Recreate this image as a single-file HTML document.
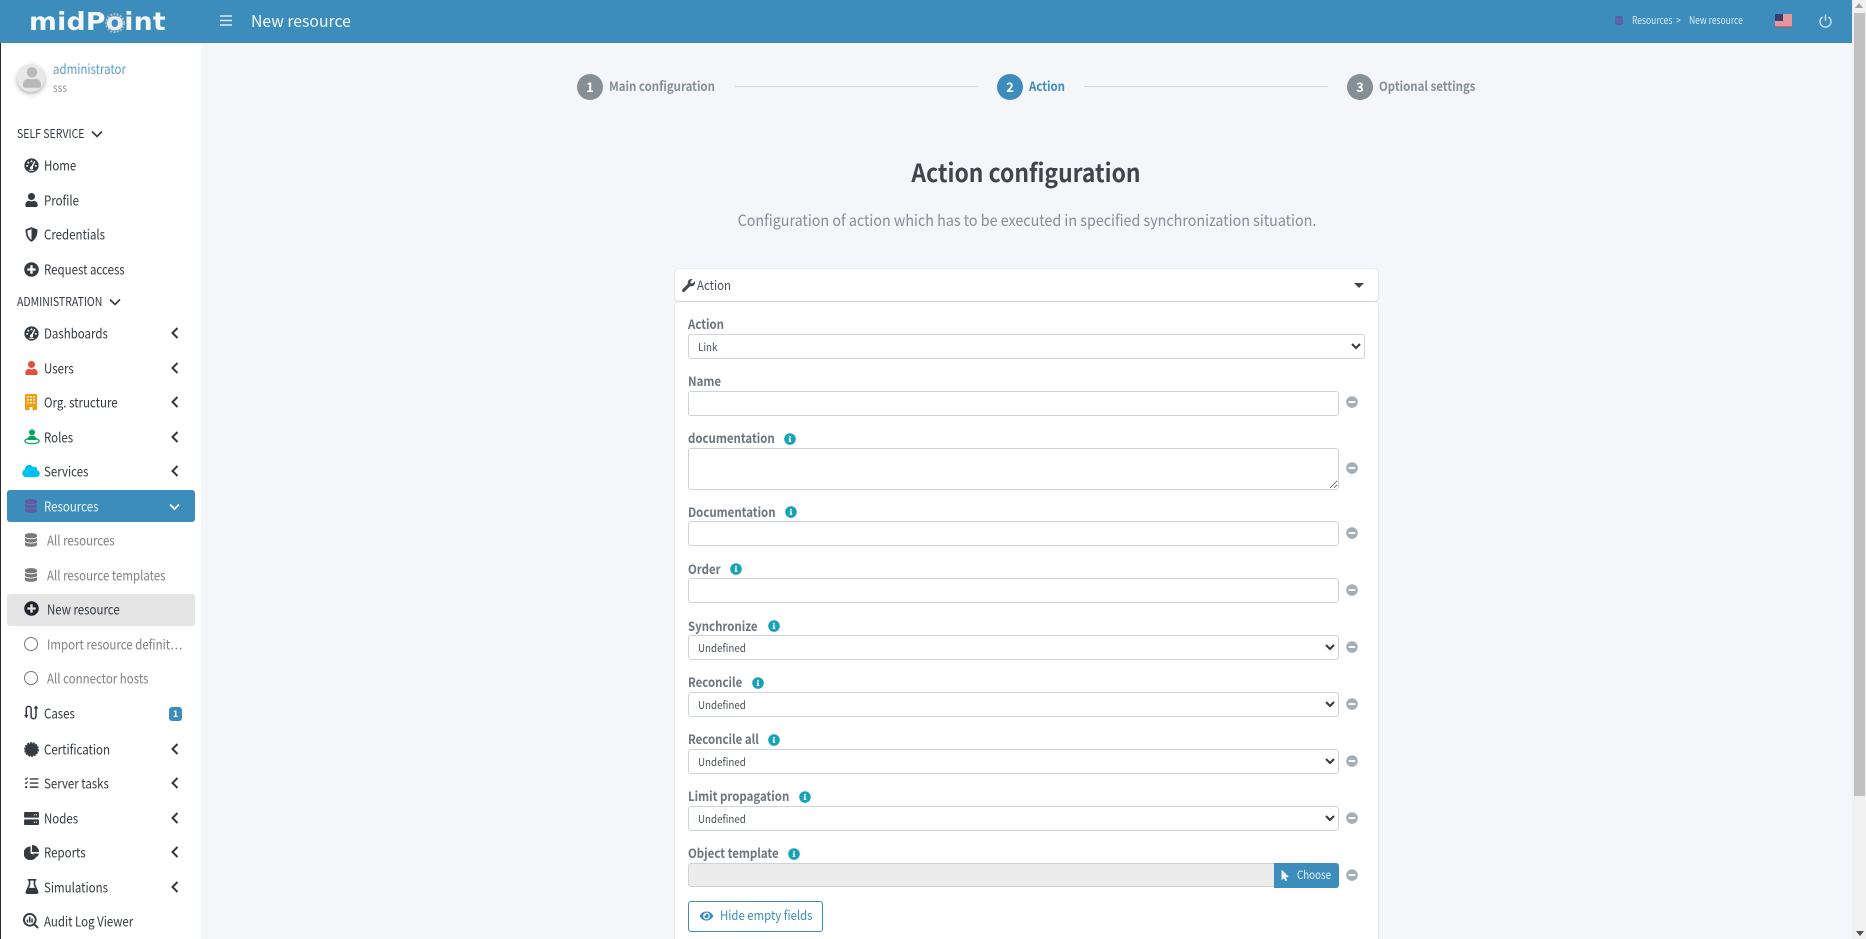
<!DOCTYPE html>
<html><head><meta charset="utf-8"><title>New resource</title>
<style>
html,body{margin:0;padding:0;width:1866px;height:939px;overflow:hidden;background:#f4f6f9}
body{position:relative;font-family:"Noto Sans CJK SC","Liberation Sans",sans-serif;font-size:14px;color:#343a40}
.a{position:absolute}
.t{position:absolute;white-space:nowrap;line-height:20px;height:20px;transform-origin:0 50%}
svg.i{position:absolute;overflow:visible}
.s{font-size:13.5px;color:#343a40;transform:translateY(-.7px) scaleX(.85)}
.sub{font-size:13.5px;color:#7d8185;transform:translateY(-.7px) scaleX(.85)}
.sec{font-size:12px;color:#343a40;transform:scaleX(.875)}
.l{font-size:13px;font-weight:700;color:#6c757d;transform:scaleX(.88)}
.st{font-size:13px;font-weight:700;color:#868e96;transform:scaleX(.88)}
.bc{font-size:10.5px;color:#d9eaf4;transform:translateY(1px) scaleX(.81)}
.o{font-size:11px;color:#495057;left:698px;transform:scaleX(.89)}
.f{position:absolute;box-sizing:border-box;left:688px;width:651px;height:25px;border:1px solid #ced4da;border-radius:3px;background:#fff;margin:0;padding:0 8px;font:11px "Noto Sans CJK SC","Liberation Sans",sans-serif;color:#343a40;outline:0}
select.f{padding:0 4px}
</style></head><body>
<svg width="0" height="0" style="position:absolute"><defs>
<symbol id="user" viewBox="0 0 448 512"><path d="M224 256c70.7 0 128-57.3 128-128S294.7 0 224 0 96 57.3 96 128s57.3 128 128 128zm89.6 32h-16.7c-22.2 10.2-46.9 16-72.9 16s-50.6-5.8-72.9-16h-16.7C60.2 288 0 348.2 0 422.4V464c0 26.5 21.5 48 48 48h352c26.5 0 48-21.5 48-48v-41.6c0-74.2-60.2-134.4-134.4-134.4z"/></symbol>
<symbol id="plus" viewBox="0 0 512 512"><path d="M256 8C119 8 8 119 8 256s111 248 248 248 248-111 248-248S393 8 256 8zm144 276c0 6.6-5.4 12-12 12h-92v92c0 6.6-5.4 12-12 12h-56c-6.6 0-12-5.4-12-12v-92h-92c-6.6 0-12-5.4-12-12v-56c0-6.6 5.4-12 12-12h92v-92c0-6.6 5.4-12 12-12h56c6.6 0 12 5.4 12 12v92h92c6.6 0 12 5.4 12 12v56z"/></symbol>
<symbol id="minus" viewBox="0 0 512 512"><path d="M256 8C119 8 8 119 8 256s111 248 248 248 248-111 248-248S393 8 256 8zM124 296c-6.6 0-12-5.4-12-12v-56c0-6.6 5.4-12 12-12h264c6.6 0 12 5.4 12 12v56c0 6.6-5.4 12-12 12H124z"/></symbol>
<symbol id="info" viewBox="0 0 512 512"><path d="M256 8C119.043 8 8 119.083 8 256c0 136.997 111.043 248 248 248s248-111.003 248-248C504 119.083 392.957 8 256 8zm0 110c23.196 0 42 18.804 42 42s-18.804 42-42 42-42-18.804-42-42 18.804-42 42-42zm56 254c0 6.627-5.373 12-12 12h-88c-6.627 0-12-5.373-12-12v-24c0-6.627 5.373-12 12-12h12v-64h-12c-6.627 0-12-5.373-12-12v-24c0-6.627 5.373-12 12-12h64c6.627 0 12 5.373 12 12v100h12c6.627 0 12 5.373 12 12v24z"/></symbol>
<symbol id="db" viewBox="0 0 448 512"><path d="M448 73.143v45.714C448 159.143 347.667 192 224 192S0 159.143 0 118.857V73.143C0 32.857 100.333 0 224 0s224 32.857 224 73.143zM448 176v102.857C448 319.143 347.667 352 224 352S0 319.143 0 278.857V176c48.125 33.143 136.208 48.572 224 48.572S399.874 209.143 448 176zm0 160v102.857C448 479.143 347.667 512 224 512S0 479.143 0 438.857V336c48.125 33.143 136.208 48.572 224 48.572S399.874 369.143 448 336z"/></symbol>
<symbol id="gauge" viewBox="0 0 16 16"><circle cx="8" cy="8" r="7.6"/><g fill="#fff"><circle cx="8" cy="3.6" r="1.1"/><circle cx="4.6" cy="5" r="1.1"/><circle cx="3.4" cy="8.4" r="1.1"/><circle cx="12.6" cy="8.4" r="1.1"/></g><path d="M11.5 3.6 8.2 10" stroke="#fff" stroke-width="1.5"/><circle cx="8" cy="10.6" r="1.7" fill="#fff"/><path d="M5 13.4h6" stroke="#fff" stroke-width=".8"/></symbol>
<symbol id="shield" viewBox="0 0 14 16"><path fill-rule="evenodd" d="M7 0 .6 2.6C.4 8 2.2 13.4 7 16c4.8-2.6 6.6-8 6.4-13.4L7 0zm0 2.2v11.5C3.9 11.7 2.6 8 2.5 3.9L7 2.2z"/></symbol>
<symbol id="org" viewBox="0 0 12 16"><path fill-rule="evenodd" d="M1 0h10a1 1 0 0 1 1 1v15H7.6v-3H4.4v3H0V1a1 1 0 0 1 1-1zM2.2 2v1.6h1.6V2zm3 0v1.6h1.6V2zm3 0v1.6h1.6V2zm-6 3v1.6h1.6V5zm3 0v1.6h1.6V5zm3 0v1.6h1.6V5zm-6 3v1.6h1.6V8zm3 0v1.6h1.6V8zm3 0v1.6h1.6V8z"/></symbol>
<symbol id="role" viewBox="0 0 16 16"><circle cx="8" cy="3.4" r="3"/><path d="M3.6 11c0-3 1.8-4.2 4.4-4.2s4.4 1.2 4.4 4.2z"/><ellipse cx="8" cy="12" rx="7.2" ry="2.8" fill="none" stroke-width="1.2" stroke="#00a65a"/></symbol>
<symbol id="cloud" viewBox="0 0 640 512"><path d="M537.6 226.6c4.1-10.7 6.4-22.4 6.4-34.6 0-53-43-96-96-96-19.7 0-38.1 6-53.3 16.2C367 64.2 315.3 32 256 32c-88.4 0-160 71.6-160 160 0 2.7.1 5.4.2 8.1C40.2 219.8 0 273.2 0 336c0 79.5 64.5 144 144 144h368c70.7 0 128-57.3 128-128 0-61.9-44-113.6-102.4-125.4z"/></symbol>
<symbol id="cases" viewBox="0 0 16 16"><path d="M2.4 12V4a2.6 2.6 0 0 1 5.2 0v8a2.6 2.6 0 0 0 5.2 0V2.5" fill="none" stroke="#343a40" stroke-width="1.6"/><path d="M0 10.5h4.8L2.4 14.2zM10.4 3.8h4.8L12.8 .2z"/></symbol>
<symbol id="cert" viewBox="0 0 16 16"><circle cx="8" cy="8" r="6.6"/><circle cx="8" cy="8" r="7" fill="none" stroke="#343a40" stroke-width="1.8" stroke-dasharray="2.2 .9"/></symbol>
<symbol id="tasks" viewBox="0 0 16 14"><path d="M6 1.4h10v1.7H6zM6 6.2h10v1.7H6zM6 11h10v1.7H6z"/><path d="M.4 1.8l1.1 1.1L3.6.6M.4 6.6l1.1 1.1 2.1-2.3" fill="none" stroke="#343a40" stroke-width="1.2"/><circle cx="1.8" cy="11.8" r="1.3"/></symbol>
<symbol id="server" viewBox="0 0 16 14"><path fill-rule="evenodd" d="M1 0h14a1 1 0 0 1 1 1v4a1 1 0 0 1-1 1H1a1 1 0 0 1-1-1V1a1 1 0 0 1 1-1zm9.5 2.4v1.2h1.2V2.4zm2.2 0v1.2h1.2V2.4zM1 8h14a1 1 0 0 1 1 1v4a1 1 0 0 1-1 1H1a1 1 0 0 1-1-1V9a1 1 0 0 1 1-1zm9.5 2.4v1.2h1.2v-1.2zm2.2 0v1.2h1.2v-1.2z"/></symbol>
<symbol id="pie" viewBox="0 0 16 16"><path d="M7 1.6A7.3 7.3 0 1 0 13.7 11.4L7 9z"/><path d="M8.5 0A7.5 7.5 0 0 1 16 7.5H8.5z"/><path d="M9.2 9h6.6a7.4 7.4 0 0 1-1.8 3.7z"/></symbol>
<symbol id="flask" viewBox="0 0 14 16"><path d="M3 0h8a.8.8 0 0 1 0 1.7h-.5v4.2l3.2 7.2c.6 1.4-.3 2.9-1.8 2.9H2.1C.6 16-.3 14.5.3 13.1l3.2-7.200V1.7H3A.8.8 0 0 1 3 0zm2.2 1.7v4.600L3.800 9.400h6.400L8.800 6.300V1.700z" fill-rule="evenodd"/></symbol>
<symbol id="audit" viewBox="0 0 16 16"><path fill-rule="evenodd" d="M6.800 0a6.800 6.800 0 0 1 5.400 10.900l3.500 3.500-1.300 1.300-3.500-3.500A6.800 6.800 0 1 1 6.800 0z"/><circle cx="6.800" cy="6.800" r="4.900" fill="#fff"/><path d="M3.700 6.500h1.500v3H3.700zM6 3.700h1.500v5.800H6zM8.300 5.500h1.500v4H8.300z"/></symbol>
<symbol id="left" viewBox="0 0 8 12"><path d="M6.500 1 1.500 6l5 5" fill="none" stroke="#343a40" stroke-width="2"/></symbol>
</defs></svg>

<!-- sidebar -->
<div class="a" style="left:0;top:0;width:201px;height:939px;background:#fff"></div>
<div class="a" style="left:0;top:43px;width:1px;height:896px;background:#2a2a2a"></div>

<!-- header -->
<div class="a" style="left:0;top:0;width:1853px;height:43px;background:#3c8dbc"></div>
<div class="t" style="left:29px;top:7px;height:30px;font:700 25px/30px 'DejaVu Sans',sans-serif;color:#f3f8fb;letter-spacing:.2px;transform:scaleX(1.07)">midP<span style="color:#e8eef2">o</span>int</div>
<svg class="a" style="left:103px;top:11px" width="24" height="24" viewBox="0 0 24 24"><circle cx="12" cy="12" r="8.800" fill="none" stroke="#a9bac4" stroke-width="2.400" stroke-dasharray="2 1.300"/></svg>
<svg class="i" style="left:220px;top:15px" width="12" height="11" viewBox="0 0 12 11"><path d="M0 1h12M0 5.500h12M0 10h12" stroke="#dcebf3" stroke-width="1.500"/></svg>
<div class="t" style="left:251px;top:10px;font-size:16.500px;color:#f2f8fb;transform:scaleX(.955)">New resource</div>
<svg class="i" style="left:1615px;top:16px;fill:#5f5aa2" width="8" height="9"><use href="#db"/></svg>
<div class="t bc" style="left:1631.500px;top:10px">Resources</div>
<div class="t bc" style="left:1676px;top:10px">&gt;</div>
<div class="t bc" style="left:1688.500px;top:10px">New resource</div>
<svg class="i" style="left:1775px;top:14px" width="17" height="13" viewBox="0 0 17 13"><rect width="17" height="13" fill="#fff"/><path d="M0 1h17M0 3h17M0 5h17M0 7h17M0 9h17M0 11h17M0 12.700h17" stroke="#c8323c" stroke-width="1"/><rect width="8" height="7" fill="#3c3b6e"/></svg>
<svg class="i" style="left:1819px;top:14px" width="13" height="14" viewBox="0 0 13 14"><path d="M3.500 3A5.500 5.500 0 1 0 9.500 3M6.500 .6v6" fill="none" stroke="#cfe4f0" stroke-width="1.400"/></svg>

<!-- scrollbar -->
<div class="a" style="left:1852px;top:0;width:14px;height:939px;background:#f1f1f1"></div>
<div class="a" style="left:1854px;top:13px;width:11px;height:783px;background:#c1c1c1"></div>
<div class="a" style="left:1855px;top:3px;width:0;height:0;border:4px solid transparent;border-top:0;border-bottom:5px solid #a3a3a3"></div>
<div class="a" style="left:1855.500px;top:931px;width:0;height:0;border:4px solid transparent;border-bottom:0;border-top:5px solid #505050"></div>

<!-- user -->
<div class="a" style="left:17px;top:64px;width:28px;height:28px;border-radius:50%;background:#e8e8e8;box-shadow:0 2px 5px rgba(0,0,0,.3)"></div>
<svg class="i" style="left:23px;top:67px;fill:#b9b9b9" width="18" height="21"><use href="#user"/></svg>
<div class="t" style="left:52.500px;top:58px;font-size:13.500px;color:#5a9ecb;transform:scaleX(.85)">administrator</div>
<div class="t" style="left:52.500px;top:78px;font-size:11.500px;color:#8a9096;transform:scaleX(.86)">sss</div>

<!-- sidebar text -->
<div class="t sec" style="left:17px;top:124px">SELF SERVICE</div>
<svg class="i" style="left:91px;top:130px" width="12" height="8" viewBox="0 0 12 8"><path d="M1 1.500l5 5 5-5" fill="none" stroke="#343a40" stroke-width="1.600"/></svg>
<svg class="i" style="left:24px;top:158px;fill:#343a40" width="15" height="15"><use href="#gauge"/></svg>
<div class="t s" style="left:44px;top:155px">Home</div>
<svg class="i" style="left:25px;top:193px;fill:#343a40" width="13" height="14"><use href="#user"/></svg>
<div class="t s" style="left:44px;top:190px">Profile</div>
<svg class="i" style="left:24.500px;top:227px;fill:#343a40" width="13" height="15"><use href="#shield"/></svg>
<div class="t s" style="left:44px;top:224px">Credentials</div>
<svg class="i" style="left:24px;top:262px;fill:#343a40" width="15" height="15"><use href="#plus"/></svg>
<div class="t s" style="left:44px;top:259px">Request access</div>
<div class="t sec" style="left:17px;top:292px">ADMINISTRATION</div>
<svg class="i" style="left:109px;top:298px" width="12" height="8" viewBox="0 0 12 8"><path d="M1 1.500l5 5 5-5" fill="none" stroke="#343a40" stroke-width="1.600"/></svg>

<svg class="i" style="left:24px;top:326px;fill:#343a40" width="15" height="15"><use href="#gauge"/></svg>
<div class="t s" style="left:44px;top:323px">Dashboards</div>
<svg class="i" style="left:171px;top:327px" width="8" height="12"><use href="#left"/></svg>
<svg class="i" style="left:25px;top:361px;fill:#e74c3c" width="13" height="14"><use href="#user"/></svg>
<div class="t s" style="left:44px;top:358px">Users</div>
<svg class="i" style="left:171px;top:362px" width="8" height="12"><use href="#left"/></svg>
<svg class="i" style="left:25px;top:394px;fill:#f39c12" width="12" height="16"><use href="#org"/></svg>
<div class="t s" style="left:44px;top:392px">Org. structure</div>
<svg class="i" style="left:171px;top:396px" width="8" height="12"><use href="#left"/></svg>
<svg class="i" style="left:23.500px;top:429px;fill:#00a65a" width="16" height="16"><use href="#role"/></svg>
<div class="t s" style="left:44px;top:427px">Roles</div>
<svg class="i" style="left:171px;top:431px" width="8" height="12"><use href="#left"/></svg>
<svg class="i" style="left:22px;top:464px;fill:#00c0ef" width="18" height="14"><use href="#cloud"/></svg>
<div class="t s" style="left:44px;top:461px">Services</div>
<svg class="i" style="left:171px;top:465px" width="8" height="12"><use href="#left"/></svg>

<div class="a" style="left:7px;top:490px;width:188px;height:32px;background:#3c8dbc;border-radius:3px"></div>
<svg class="i" style="left:25px;top:499px;fill:#5f5aa2" width="12" height="14"><use href="#db"/></svg>
<div class="t s" style="left:44px;top:496px;color:#eef6fa">Resources</div>
<svg class="i" style="left:169px;top:503px" width="11" height="8" viewBox="0 0 11 8"><path d="M1 1.500l4.500 4.500 4.500-4.500" fill="none" stroke="#fff" stroke-width="1.700"/></svg>

<svg class="i" style="left:25px;top:533px;fill:#7a7a7a" width="12" height="14"><use href="#db"/></svg>
<div class="t sub" style="left:46.500px;top:530px">All resources</div>
<svg class="i" style="left:25px;top:568px;fill:#7a7a7a" width="12" height="14"><use href="#db"/></svg>
<div class="t sub" style="left:46.500px;top:565px">All resource templates</div>
<div class="a" style="left:7px;top:594px;width:188px;height:32px;background:#e4e4e4;border-radius:3px"></div>
<svg class="i" style="left:24px;top:601px;fill:#20232a" width="15" height="15"><use href="#plus"/></svg>
<div class="t s" style="left:46.500px;top:599px">New resource</div>
<div class="a" style="left:24px;top:637px;width:14px;height:14px;box-sizing:border-box;border:1.600px solid #80766e;border-radius:50%"></div>
<div class="t sub" style="left:46.500px;top:634px">Import resource definit…</div>
<div class="a" style="left:24px;top:671px;width:14px;height:14px;box-sizing:border-box;border:1.600px solid #80766e;border-radius:50%"></div>
<div class="t sub" style="left:46.500px;top:668px">All connector hosts</div>

<svg class="i" style="left:24px;top:705px;fill:#343a40" width="15" height="15"><use href="#cases"/></svg>
<div class="t s" style="left:44px;top:703px">Cases</div>
<div class="a" style="left:169px;top:707px;width:13px;height:14px;background:#3c8dbc;border-radius:3px;color:#fff;font-size:9px;font-weight:700;line-height:14px;text-align:center">1</div>
<svg class="i" style="left:24px;top:741.500px;fill:#343a40" width="15" height="15"><use href="#cert"/></svg>
<div class="t s" style="left:44px;top:739px">Certification</div>
<svg class="i" style="left:171px;top:743px" width="8" height="12"><use href="#left"/></svg>
<svg class="i" style="left:24px;top:777px;fill:#343a40" width="15" height="12"><use href="#tasks"/></svg>
<div class="t s" style="left:44px;top:773px">Server tasks</div>
<svg class="i" style="left:171px;top:777px" width="8" height="12"><use href="#left"/></svg>
<svg class="i" style="left:24px;top:811.500px;fill:#343a40" width="15" height="13"><use href="#server"/></svg>
<div class="t s" style="left:44px;top:808px">Nodes</div>
<svg class="i" style="left:171px;top:812px" width="8" height="12"><use href="#left"/></svg>
<svg class="i" style="left:24px;top:844.500px;fill:#343a40" width="15" height="15"><use href="#pie"/></svg>
<div class="t s" style="left:44px;top:842px">Reports</div>
<svg class="i" style="left:171px;top:846px" width="8" height="12"><use href="#left"/></svg>
<svg class="i" style="left:24.500px;top:879px;fill:#343a40" width="14" height="15"><use href="#flask"/></svg>
<div class="t s" style="left:44px;top:877px">Simulations</div>
<svg class="i" style="left:171px;top:881px" width="8" height="12"><use href="#left"/></svg>
<svg class="i" style="left:23px;top:912.500px;fill:#343a40" width="16" height="16"><use href="#audit"/></svg>
<div class="t s" style="left:44px;top:911px">Audit Log Viewer</div>

<!-- stepper -->
<div class="a" style="left:577px;top:74px;width:26px;height:26px;border-radius:50%;background:#868e96;color:#fff;font-weight:700;font-size:13px;line-height:26px;text-align:center">1</div>
<div class="t st" style="left:609px;top:76px">Main configuration</div>
<div class="a" style="left:735px;top:86px;width:243px;height:1px;background:#d5d8dc"></div>
<div class="a" style="left:997px;top:74px;width:26px;height:26px;border-radius:50%;background:#3c8dbc;color:#fff;font-weight:700;font-size:13px;line-height:26px;text-align:center">2</div>
<div class="t st" style="left:1029px;top:76px;color:#3c8dbc">Action</div>
<div class="a" style="left:1084px;top:86px;width:244px;height:1px;background:#d5d8dc"></div>
<div class="a" style="left:1347px;top:74px;width:26px;height:26px;border-radius:50%;background:#868e96;color:#fff;font-weight:700;font-size:13px;line-height:26px;text-align:center">3</div>
<div class="t st" style="left:1379px;top:76px">Optional settings</div>

<!-- title -->
<div class="a" style="left:526px;top:151.500px;width:1000px;text-align:center;font-size:25px;font-weight:700;line-height:40px;color:#3f454b;transform:scaleX(.915)">Action configuration</div>
<div class="a" style="left:526.500px;top:208.500px;width:1000px;text-align:center;font-size:15.500px;line-height:22px;color:#868e96;transform:scaleX(.922)">Configuration of action which has to be executed in specified synchronization situation.</div>

<!-- card header -->
<div class="a" style="left:675px;top:269px;width:703px;height:32px;background:#fff;border-radius:4px;box-shadow:0 0 1px rgba(0,0,0,.2),0 1px 2px rgba(0,0,0,.12)"></div>
<svg class="i" style="left:682px;top:279px;fill:#454b51" width="13" height="13" viewBox="0 0 512 512"><path d="M507.730 109.100c-2.240-9.030-13.540-12.090-20.120-5.510l-74.360 74.360-67.880-11.310-11.310-67.880 74.360-74.360c6.620-6.620 3.430-17.900-5.660-20.160-47.380-11.740-99.550.91-136.580 37.930-39.640 39.640-50.550 97.100-34.050 147.200L18.740 402.760c-24.990 24.990-24.990 65.510 0 90.500 24.990 24.990 65.510 24.990 90.500 0l213.210-213.210c50.120 16.710 107.470 5.680 147.370-34.220 37.070-37.070 49.700-89.320 37.910-136.730z"/></svg>
<div class="t" style="left:697px;top:275px;font-size:13px;color:#495057;transform:scaleX(.88)">Action</div>
<div class="a" style="left:1354px;top:283px;width:0;height:0;border:5px solid transparent;border-bottom:0;border-top:5.500px solid #3f454b"></div>

<!-- card body -->
<div class="a" style="left:675px;top:302px;width:703px;height:660px;background:#fff;border-radius:4px;box-shadow:0 0 1px rgba(0,0,0,.2),0 1px 2px rgba(0,0,0,.12)"></div>

<div class="t l" style="left:688px;top:314px">Action</div>
<select class="f" style="top:334px;width:677px"><option></option></select>
<div class="t o" style="top:336.500px">Link</div>

<div class="t l" style="left:688px;top:371px">Name</div>
<input class="f" style="top:391px">
<svg class="i" style="left:1346px;top:396px;fill:#a5adb5" width="12" height="12"><use href="#minus"/></svg>

<div class="t l" style="left:688px;top:428px">documentation</div>
<svg class="i" style="left:784px;top:433px;fill:#17a2b8" width="12" height="12"><use href="#info"/></svg>
<textarea class="f" style="top:448px;height:42px;display:block"></textarea>
<svg class="i" style="left:1346px;top:462px;fill:#a5adb5" width="12" height="12"><use href="#minus"/></svg>

<div class="t l" style="left:688px;top:501.500px">Documentation</div>
<svg class="i" style="left:785px;top:506px;fill:#17a2b8" width="12" height="12"><use href="#info"/></svg>
<input class="f" style="top:521px">
<svg class="i" style="left:1346px;top:527px;fill:#a5adb5" width="12" height="12"><use href="#minus"/></svg>

<div class="t l" style="left:688px;top:558.500px">Order</div>
<svg class="i" style="left:730px;top:563px;fill:#17a2b8" width="12" height="12"><use href="#info"/></svg>
<input class="f" style="top:578px">
<svg class="i" style="left:1346px;top:584px;fill:#a5adb5" width="12" height="12"><use href="#minus"/></svg>

<div class="t l" style="left:688px;top:615.500px">Synchronize</div>
<svg class="i" style="left:767.500px;top:620px;fill:#17a2b8" width="12" height="12"><use href="#info"/></svg>
<select class="f" style="top:635px"><option></option></select>
<div class="t o" style="top:637.500px">Undefined</div>
<svg class="i" style="left:1346px;top:641px;fill:#a5adb5" width="12" height="12"><use href="#minus"/></svg>

<div class="t l" style="left:688px;top:672px">Reconcile</div>
<svg class="i" style="left:751.500px;top:677px;fill:#17a2b8" width="12" height="12"><use href="#info"/></svg>
<select class="f" style="top:692px"><option></option></select>
<div class="t o" style="top:694.500px">Undefined</div>
<svg class="i" style="left:1346px;top:698px;fill:#a5adb5" width="12" height="12"><use href="#minus"/></svg>

<div class="t l" style="left:688px;top:729px">Reconcile all</div>
<svg class="i" style="left:768px;top:734px;fill:#17a2b8" width="12" height="12"><use href="#info"/></svg>
<select class="f" style="top:749px"><option></option></select>
<div class="t o" style="top:751.500px">Undefined</div>
<svg class="i" style="left:1346px;top:755px;fill:#a5adb5" width="12" height="12"><use href="#minus"/></svg>

<div class="t l" style="left:688px;top:786px">Limit propagation</div>
<svg class="i" style="left:799px;top:791px;fill:#17a2b8" width="12" height="12"><use href="#info"/></svg>
<select class="f" style="top:806px"><option></option></select>
<div class="t o" style="top:808.500px">Undefined</div>
<svg class="i" style="left:1346px;top:812px;fill:#a5adb5" width="12" height="12"><use href="#minus"/></svg>

<div class="t l" style="left:688px;top:842.500px">Object template</div>
<svg class="i" style="left:788px;top:848px;fill:#17a2b8" width="12" height="12"><use href="#info"/></svg>
<div class="f" style="top:863px;width:587px;height:24px;background:#ececec;border-radius:3px 0 0 3px"></div>
<div class="a" style="left:1274px;top:863px;width:65px;height:25px;background:#3c8dbc;border-radius:0 3px 3px 0"></div>
<svg class="i" style="left:1281px;top:870px;fill:#f2f7fa" width="8" height="11" viewBox="0 0 320 512"><path d="M302.189 329.126H196.105l55.831 135.993c3.889 9.428-.555 19.999-9.444 23.999l-49.165 21.427c-9.165 4-19.443-.571-23.332-9.714l-53.053-129.136-86.664 89.138C18.729 472.710 0 463.554 0 447.977V18.299C0 1.899 19.921-6.096 30.277 5.443l284.412 292.542c11.472 11.179 3.007 31.141-12.500 31.141z"/></svg>
<div class="t" style="left:1297px;top:865px;font-size:11.500px;color:#eaf3f8;transform:scaleX(.85)">Choose</div>
<svg class="i" style="left:1346px;top:869px;fill:#a5adb5" width="12" height="12"><use href="#minus"/></svg>

<div class="a" style="left:688px;top:901px;width:135px;height:31px;box-sizing:border-box;border:1px solid #3c8dbc;border-radius:3px;background:#fff"></div>
<svg class="i" style="left:698.500px;top:909.500px;fill:#3c8dbc" width="15" height="12" viewBox="0 0 576 512"><path d="M572.520 241.400C518.290 135.590 410.930 64 288 64S57.680 135.640 3.480 241.410a32.350 32.350 0 0 0 0 29.190C57.710 376.410 165.070 448 288 448s230.320-71.640 284.520-177.410a32.350 32.350 0 0 0 0-29.190zM288 400a144 144 0 1 1 144-144 143.930 143.930 0 0 1-144 144zm0-240a95.310 95.310 0 0 0-25.310 3.790 47.850 47.850 0 0 1-66.900 66.900A95.780 95.780 0 1 0 288 160z"/></svg>
<div class="t" style="left:720px;top:905px;font-size:13px;color:#3c8dbc;transform:scaleX(.875)">Hide empty fields</div>
</body></html>
